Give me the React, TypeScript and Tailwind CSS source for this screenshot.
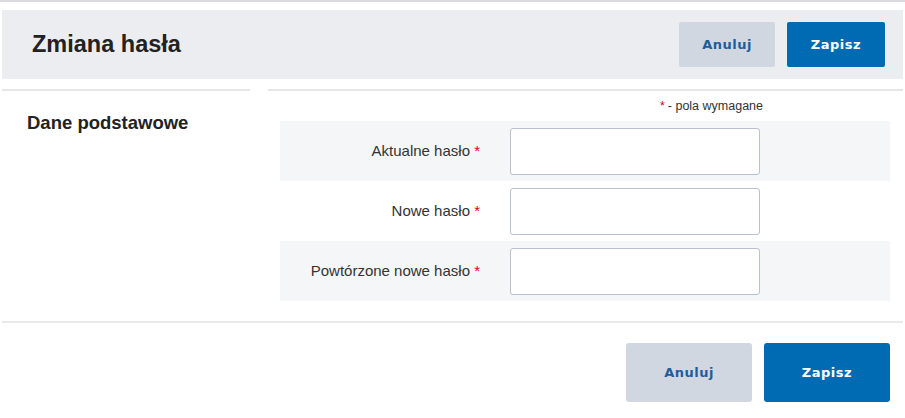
import React from 'react';

const fields = [
  { label: 'Aktualne hasło', shaded: true },
  { label: 'Nowe hasło', shaded: false },
  { label: 'Powtórzone nowe hasło', shaded: true },
];

const btnFont = { fontFamily: '"DejaVu Sans", Verdana, sans-serif' };

export default function App() {
  return (
    <div
      className="w-[905px] h-[418px] bg-white overflow-hidden"
      style={{ fontFamily: '"Liberation Sans", Arial, sans-serif' }}
    >
      <div className="h-[2px] bg-[#d9dbdf]" />
      <div className="mx-[2px] mt-[8px] h-[69px] bg-[#ecedf0] flex items-center justify-between pl-[30px] pr-[18px]">
        <h1 className="text-[23.5px] font-bold text-[#222]">Zmiana hasła</h1>
        <div className="flex gap-[12px]">
          <button
            className="w-[96px] h-[45px] rounded-[2px] bg-[#d1d7e1] text-[#1d5e9c] text-[13px] font-bold tracking-[0.5px]"
            style={btnFont}
          >
            Anuluj
          </button>
          <button
            className="w-[98px] h-[45px] rounded-[2px] bg-[#006bb2] text-white text-[13px] font-bold tracking-[0.5px]"
            style={btnFont}
          >
            Zapisz
          </button>
        </div>
      </div>

      <div className="flex mt-[10px]">
        <div className="w-[248px] ml-[2px] border-t-2 border-[#e5e6e8] pt-[18px] pl-[25px]">
          <h2 className="text-[18.5px] font-bold text-[#222]">Dane podstawowe</h2>
        </div>
        <div className="flex-1 ml-[18px] mr-[2px] border-t-2 border-[#e5e6e8]">
          <div className="h-[30px] flex items-center justify-end pr-[140px] text-[12.5px] text-[#333]">
            <span className="text-[#d0021b] mr-[3px]">*</span>- pola wymagane
          </div>
          <div className="ml-[12px] mr-[13px]">
            {fields.map((f) => (
              <div
                key={f.label}
                className={`h-[60px] flex items-center ${f.shaded ? 'bg-[#f5f6f8]' : 'bg-white'}`}
              >
                <label className="w-[200px] text-right text-[15px] text-[#333]">
                  {f.label} <span className="text-[#d0021b]">*</span>
                </label>
                <input
                  type="password"
                  className="ml-[30px] w-[250px] h-[47px] bg-white border border-[#b8c1cf] rounded-[3px] outline-none"
                />
              </div>
            ))}
          </div>
        </div>
      </div>

      <div className="mx-[2px] mt-[20px] h-[2px] bg-[#e8e9eb]" />
      <div className="flex justify-end gap-[12px] pr-[15px] pt-[20px]">
        <button
          className="w-[126px] h-[59px] rounded-[3px] bg-[#d1d7e1] text-[#1d5e9c] text-[13px] font-bold tracking-[0.5px]"
          style={btnFont}
        >
          Anuluj
        </button>
        <button
          className="w-[126px] h-[59px] rounded-[3px] bg-[#006bb2] text-white text-[13px] font-bold tracking-[0.5px]"
          style={btnFont}
        >
          Zapisz
        </button>
      </div>
    </div>
  );
}
